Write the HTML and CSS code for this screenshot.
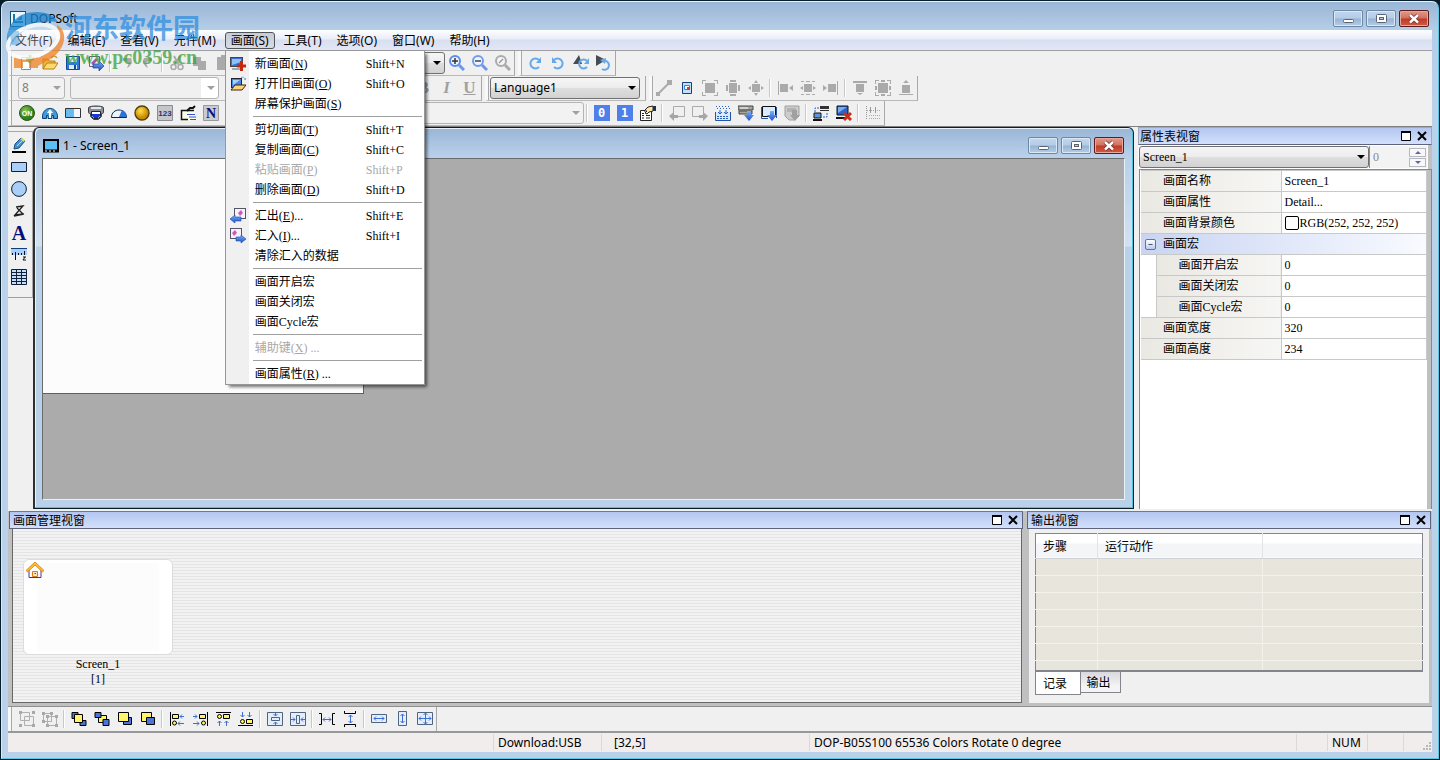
FILE: index.html
```html
<!DOCTYPE html>
<html lang="zh-CN">
<head>
<meta charset="utf-8">
<title>DOPSoft</title>
<link rel="stylesheet" href="styles.css">
</head>
<body>
<svg class="defs" aria-hidden="true">
  <defs>
    <linearGradient id="blue" x1="0" y1="0" x2="0" y2="1"><stop offset="0" stop-color="#7db0f5"/><stop offset="1" stop-color="#1c4fd0"/></linearGradient>
    <radialGradient id="gold" cx=".4" cy=".35"><stop offset="0" stop-color="#ffe04a"/><stop offset="1" stop-color="#c98a00"/></radialGradient>
    <radialGradient id="green" cx=".4" cy=".35"><stop offset="0" stop-color="#8fc850"/><stop offset="1" stop-color="#2f7d1e"/></radialGradient>
    <symbol id="min" viewBox="0 0 14 12"><rect x="2.500" y="6.500" width="10" height="3" rx="1" fill="#fff" stroke="#5b6472"/></symbol>
    <symbol id="max" viewBox="0 0 14 12"><rect x="2.500" y="1.500" width="10" height="8" rx="1" fill="#fff" stroke="#5b6472"/><rect x="5.500" y="4.500" width="4" height="2" fill="#b5cde6" stroke="#5b6472"/></symbol>
    <symbol id="close" viewBox="0 0 14 12"><path d="M3 2l8 7.500M11 2l-8 7.500" stroke="#6d3030" stroke-width="4"/><path d="M3 2l8 7.500M11 2l-8 7.500" stroke="#fff" stroke-width="2.400"/></symbol>
    <symbol id="dock" viewBox="0 0 12 12"><path d="M1.500 2v8.500h9V2z" fill="#fff" stroke="#000"/><path d="M1 2h10" stroke="#000" stroke-width="2"/></symbol>
    <symbol id="x" viewBox="0 0 12 12"><path d="M2 2l8 8M10 2l-8 8" stroke="#000" stroke-width="2"/></symbol>
  </defs>
</svg>

<div class="window">
  <header class="titlebar">
    <svg class="app-icon" viewBox="0 0 16 16"><rect x=".5" y=".5" width="15" height="15" fill="#eef6fc" stroke="#14506e"/><path d="M4 3v9M4 11h9" stroke="#1778a8" stroke-width="2"/><path d="M7 9l5-5v5z" fill="#2a8cc0"/></svg>
    <span class="title">DOPSoft</span>
    <div class="win-buttons">
      <button class="win-btn" aria-label="Minimize"><svg width="14" height="12"><use href="#min"/></svg></button>
      <button class="win-btn" aria-label="Maximize"><svg width="14" height="12"><use href="#max"/></svg></button>
      <button class="win-btn danger" aria-label="Close"><svg width="14" height="12"><use href="#close"/></svg></button>
    </div>
  </header>

  <div class="client">
    <nav class="menubar">
      <button class="menu-item">文件(F)</button>
      <button class="menu-item">编辑(E)</button>
      <button class="menu-item">查看(V)</button>
      <button class="menu-item">元件(M)</button>
      <div class="menu-wrap">
        <button class="menu-item open">画面(S)</button>
        <div class="dropdown">
          <button class="entry"><span class="gutter"><svg viewBox="0 0 16 16"><rect x=".5" y="1.500" width="12" height="9" fill="#3a6fd8" stroke="#444"/><path d="M2 3h9v3L2 9z" fill="#8fc0f8"/><path d="M2 12h9v2H2z" fill="#a8a8b0"/><path d="M11.500 5v10M7 10h9" stroke="#c5280c" stroke-width="3"/></svg></span><span class="label">新画面(<u>N</u>)</span><span class="key">Shift+N</span></button>
          <button class="entry"><span class="gutter"><svg viewBox="0 0 16 16"><rect x="1.500" y="2.500" width="10" height="9" fill="#4a86e4" stroke="#223"/><path d="M3 4h7L3 9z" fill="#a8d0fa"/><path d="M11 2c2-2 4 0 4 2l1-2" fill="none" stroke="#6aa0d8"/><path d="M1 14l4-5h11l-4 5z" fill="#ffd27a" stroke="#3a2a00"/></svg></span><span class="label">打开旧画面(<u>O</u>)</span><span class="key">Shift+O</span></button>
          <button class="entry"><span class="gutter"></span><span class="label">屏幕保护画面(<u>S</u>)</span></button>
          <hr>
          <button class="entry"><span class="gutter"></span><span class="label">剪切画面(<u>T</u>)</span><span class="key">Shift+T</span></button>
          <button class="entry"><span class="gutter"></span><span class="label">复制画面(<u>C</u>)</span><span class="key">Shift+C</span></button>
          <button class="entry" disabled><span class="gutter"></span><span class="label">粘贴画面(<u>P</u>)</span><span class="key">Shift+P</span></button>
          <button class="entry"><span class="gutter"></span><span class="label">删除画面(<u>D</u>)</span><span class="key">Shift+D</span></button>
          <hr>
          <button class="entry"><span class="gutter"><svg viewBox="0 0 16 16"><rect x="4.500" y=".5" width="11" height="10" fill="#f4f2fa" stroke="#556"/><path d="M8 5l3-3 2 3-3 3z" fill="#d258b8"/><path d="M0 11l5-4v2h6v4H5v2z" fill="url(#blue)" stroke="#1c4aa8" stroke-width=".6"/></svg></span><span class="label">汇出(<u>E</u>)...</span><span class="key">Shift+E</span></button>
          <button class="entry"><span class="gutter"><svg viewBox="0 0 16 16"><rect x=".5" y=".5" width="11" height="10" fill="#f4f2fa" stroke="#556"/><path d="M2 5l3-3 2 3-3 3z" fill="#d258b8"/><path d="M16 11l-5-4v2H6v4h5v2z" fill="url(#blue)" stroke="#1c4aa8" stroke-width=".6"/></svg></span><span class="label">汇入(<u>I</u>)...</span><span class="key">Shift+I</span></button>
          <button class="entry"><span class="gutter"></span><span class="label">清除汇入的数据</span></button>
          <hr>
          <button class="entry"><span class="gutter"></span><span class="label">画面开启宏</span></button>
          <button class="entry"><span class="gutter"></span><span class="label">画面关闭宏</span></button>
          <button class="entry"><span class="gutter"></span><span class="label">画面Cycle宏</span></button>
          <hr>
          <button class="entry" disabled><span class="gutter"></span><span class="label">辅助键(<u>X</u>) ...</span></button>
          <hr>
          <button class="entry"><span class="gutter"></span><span class="label">画面属性(<u>R</u>) ...</span></button>
        </div>
      </div>
      <button class="menu-item">工具(T)</button>
      <button class="menu-item">选项(O)</button>
      <button class="menu-item">窗口(W)</button>
      <button class="menu-item">帮助(H)</button>
    </nav>

    <div class="toolbars">
      <div class="tool-row">
        <div class="tool-group">
          <button class="tool" aria-label="New"><svg viewBox="0 0 16 16"><path d="M2.500 2.500h9v12h-9z" fill="#fff" stroke="#7b90b0"/><path d="M11 0v8M7 4h8" stroke="#4fb04a" stroke-width="3"/></svg></button>
          <button class="tool" aria-label="Open"><svg viewBox="0 0 16 16"><path d="M1 14V4h5l1 2h6v2" fill="#f0b840" stroke="#b98010"/><path d="M1 14l4-6h11l-4 6z" fill="#ffd970" stroke="#b98010"/><path d="M9 3c2-3 5-2 6 0" fill="none" stroke="#d89020" stroke-width="1.500"/></svg></button>
          <button class="tool" aria-label="Save"><svg viewBox="0 0 16 16"><path d="M1.500 1.500h13v13h-13z" fill="#2f7ad8" stroke="#164a98"/><path d="M4 2h8v5H4z" fill="#e8f2fc"/><path d="M4 10h8v4H4z" fill="#dceafa"/><path d="M9 10h2v4H9z" fill="#164a98"/></svg></button>
          <button class="tool" aria-label="Export"><svg viewBox="0 0 16 16"><path d="M1.500 1.500h10v10h-10z" fill="#f4f2fa" stroke="#667"/><path d="M3 8l5-5 2 2-5 5z" fill="#a058a8"/><path d="M16 11l-5-5v3H5v4h6v3z" fill="url(#blue)" stroke="#20408c" stroke-width=".7"/></svg></button>
          <span class="sep"></span>
          <button class="tool gray" aria-label="Undo"><svg viewBox="0 0 16 16"><path d="M6 3h8c2 4 0 8-4 10 2-4 2-6-1-7H6z"/></svg></button>
          <button class="tool gray" aria-label="Redo"><svg viewBox="0 0 16 16"><path d="M12 3H4c-2 4 0 8 4 10-2-4-2-6 1-7h3z"/></svg></button>
          <span class="sep"></span>
          <button class="tool gray" aria-label="Cut"><svg viewBox="0 0 16 16"><path d="M5 1l5 9M11 1L6 10" fill="none" stroke="#aaa" stroke-width="2"/><circle cx="4.500" cy="12" r="2.500" fill="none" stroke="#aaa" stroke-width="1.500"/><circle cx="11.500" cy="12" r="2.500" fill="none" stroke="#aaa" stroke-width="1.500"/></svg></button>
          <button class="tool gray" aria-label="Copy"><svg viewBox="0 0 16 16"><path d="M1 2h8v9H1zM6 6h8v9H6z"/></svg></button>
          <button class="tool gray" aria-label="Paste"><svg viewBox="0 0 16 16"><path d="M2 2h4V0h4v2h4v13H2z"/></svg></button>
          <label class="combo grow-1"><select aria-label="Zoom"><option></option></select></label>
          <button class="tool" aria-label="Zoom in"><svg viewBox="0 0 16 16"><circle cx="6" cy="6" r="5" fill="#eef4ff" stroke="#5b8def" stroke-width="2"/><path d="M10 10l5 5" stroke="#6f97e8" stroke-width="3"/><path d="M3 6h6M6 3v6" stroke="#333" stroke-width="1.500"/></svg></button>
          <button class="tool" aria-label="Zoom out"><svg viewBox="0 0 16 16"><circle cx="6" cy="6" r="5" fill="#eef4ff" stroke="#6f9cf0" stroke-width="2"/><path d="M10 10l5 5" stroke="#6f97e8" stroke-width="3"/><path d="M3 6h6" stroke="#444" stroke-width="1.500"/></svg></button>
          <button class="tool" aria-label="Zoom reset"><svg viewBox="0 0 16 16"><circle cx="6" cy="6" r="5" fill="#f4f4f4" stroke="#aaa" stroke-width="2"/><path d="M10 10l5 5" stroke="#aaa" stroke-width="3"/><path d="M4 8l4-4" stroke="#999" stroke-width="1.500"/></svg></button>
        </div>
        <div class="tool-group snug">
          <button class="tool" aria-label="Rotate right"><svg viewBox="0 0 16 16"><path d="M12 12a5 5 0 1 1 0-7" fill="none" stroke="#67a9e8" stroke-width="2"/><path d="M14 2v6H9z" fill="#67a9e8"/></svg></button>
          <button class="tool" aria-label="Rotate left"><svg viewBox="0 0 16 16"><path d="M4 12a5 5 0 1 0 0-7" fill="none" stroke="#67a9e8" stroke-width="2"/><path d="M2 2v6h5z" fill="#67a9e8"/></svg></button>
          <button class="tool" aria-label="Flip vertical"><svg viewBox="0 0 16 16"><path d="M0 9l6-9 3 9z" fill="#444c55"/><path d="M14 12a4.500 4.500 0 1 1 0-6" fill="none" stroke="#67a9e8" stroke-width="2"/><path d="M16 3v6h-5z" fill="#67a9e8"/></svg></button>
          <button class="tool" aria-label="Flip horizontal"><svg viewBox="0 0 16 16"><path d="M0 0l10 5-10 6z" fill="#444c55"/><path d="M6 14a4.500 4.500 0 1 0 1-8" fill="none" stroke="#67a9e8" stroke-width="2"/><path d="M4 5l6-2-1 6z" fill="#67a9e8"/></svg></button>
        </div>
      </div>

      <div class="tool-row">
        <div class="tool-group">
          <label class="combo off w-size"><select disabled aria-label="Font size"><option>8</option></select></label>
          <label class="combo off blank w-font"><select disabled aria-label="Font"><option></option></select></label>
          <label class="combo off grow-2"><select disabled aria-label="Text color"><option></option></select></label>
          <button class="tool letter" aria-label="Bold"><b>B</b></button>
          <button class="tool letter" aria-label="Italic"><i>I</i></button>
          <button class="tool letter" aria-label="Underline"><u>U</u></button>
        </div>
        <div class="tool-group snug">
          <label class="combo w-lang"><select aria-label="Language"><option>Language1</option></select></label>
        </div>
        <div class="tool-group tight">
          <button class="tool gray" aria-label="Line"><svg viewBox="0 0 16 16"><path d="M2 14L13 3" stroke="#aaa" stroke-width="2"/><path d="M0 12h4v4H0zM11 0h5v5h-5z"/></svg></button>
          <button class="tool" aria-label="Fit"><svg viewBox="0 0 16 16"><path d="M3.500 2.500h9v11h-9z" fill="#bfe2fb" stroke="#1b3f78"/><path d="M5.500 5.500h5v4h-5z" fill="#fff" stroke="#2b8be0"/><path d="M8 7h3v3H8z" fill="#d83a2a"/></svg></button>
          <button class="tool gray" aria-label="Same width"><svg viewBox="0 0 16 16"><path d="M3 3h10v10H3zM0 0h4v1H1v3H0zM12 0h4v4h-1V1h-3zM0 12h1v3h3v1H0zM15 12h1v4h-4v-1h3z"/></svg></button>
          <button class="tool gray" aria-label="Same height"><svg viewBox="0 0 16 16"><path d="M4 3h8v10H4zM5 0h6v2H5zM5 14h6v2H5zM1 5h2v6H1zM13 5h2v6h-2z"/></svg></button>
          <button class="tool gray" aria-label="Same size"><svg viewBox="0 0 16 16"><path d="M4 4h8v8H4zM8 0l2 3H6zM8 16l2-3H6zM0 8l3-2v4zM16 8l-3-2v4z"/></svg></button>
          <span class="sep"></span>
          <button class="tool gray" aria-label="Align left"><svg viewBox="0 0 16 16"><path d="M1 1h1v14H1zM3 4h8v8H3zM12 8l4-3v6z"/></svg></button>
          <button class="tool gray" aria-label="Align center"><svg viewBox="0 0 16 16"><path d="M4 4h8v8H4zM1 1h3v1H1zM12 1h3v1h-3zM1 14h3v1H1zM12 14h3v1h-3zM6 1h4v1H6zM6 14h4v1H6zM0 8l3-2v4zM16 8l-3-2v4z"/></svg></button>
          <button class="tool gray" aria-label="Align right"><svg viewBox="0 0 16 16"><path d="M14 1h1v14h-1zM5 4h8v8H5zM4 8L0 5v6z"/></svg></button>
          <span class="sep"></span>
          <button class="tool gray" aria-label="Align top"><svg viewBox="0 0 16 16"><path d="M1 1h14v2H1zM4 4h8v8H4zM8 15l3-2H5z"/></svg></button>
          <button class="tool gray" aria-label="Align middle"><svg viewBox="0 0 16 16"><path d="M3 3h10v10H3zM0 0h4v1H1v3H0zM12 0h4v4h-1V1h-3zM0 12h1v3h3v1H0zM15 12h1v4h-4v-1h3zM6 0h4v2H6zM6 14h4v2H6zM0 6h2v4H0zM14 6h2v4h-2z"/></svg></button>
          <button class="tool gray" aria-label="Align bottom"><svg viewBox="0 0 16 16"><path d="M1 14h14v1H1zM4 5h8v8H4zM8 0l3 3H5z"/></svg></button>
        </div>
      </div>

      <div class="tool-row">
        <div class="tool-group">
          <button class="tool" aria-label="Button"><svg viewBox="0 0 16 16"><circle cx="8" cy="8" r="7.500" fill="url(#green)" stroke="#245b18"/><text x="8" y="11" class="icon-on">ON</text></svg></button>
          <button class="tool" aria-label="Meter"><svg viewBox="0 0 16 16"><path d="M.5 13.500v-3C2 1 14 1 15.500 10.500v3h-4v-3H10v3H6v-3H4.500v3z" fill="#3f9be0" stroke="#0c3f70"/><path d="M8 4l3 4H9v5H7V8H5z" fill="#fff"/></svg></button>
          <button class="tool" aria-label="Bar"><svg viewBox="0 0 16 16"><path d="M.5 3.500h15v9H.5z" fill="#f4f8fc" stroke="#333"/><path d="M1 4h8v8H1z" fill="#6abcf0"/></svg></button>
          <button class="tool" aria-label="Tank"><svg viewBox="0 0 16 16"><path d="M.5 2.500c1-2 14-2 15 0v5c0 1-1 1-2 1v3l-3 3h-5l-3-3v-3c-1 0-2 0-2-1z" fill="#8a8f98" stroke="#444"/><path d="M3 2h10v2H3z" fill="#e4e6ee"/><path d="M3.500 6.500h9v5l-2 2h-5l-2-2z" fill="#fff" stroke="#223"/><path d="M4 9h8v2l-2 2H6l-2-2z" fill="#1738d8"/></svg></button>
          <button class="tool" aria-label="Gauge"><svg viewBox="0 0 16 16"><path d="M.5 12.500c0-10 15-10 15 0z" fill="#eaf5fd" stroke="#124"/><path d="M8 12l3-7c3 1 4.500 4 4.500 7z" fill="#2a74d8"/></svg></button>
          <button class="tool" aria-label="Lamp"><svg viewBox="0 0 16 16"><circle cx="8" cy="8" r="7" fill="url(#gold)" stroke="#50400a" stroke-width="1.400"/></svg></button>
          <button class="tool" aria-label="Numeric"><svg viewBox="0 0 16 16"><path d="M.5 .5h15v15H.5z" fill="#c4c6cc" stroke="#8a8c92"/><text x="8" y="11" class="icon-num">123</text></svg></button>
          <button class="tool" aria-label="Alarm"><svg viewBox="0 0 16 16"><path d="M1.500 5.500h13v10h-13z" fill="#fbfbe8"/><path d="M14 5.500H1.500v9H8" fill="none" stroke="#111" stroke-width="1.500"/><path d="M7 6l3-3h3l2-2" fill="none" stroke="#111" stroke-width="2"/><path d="M7 9.500h8M9 12h7M10 14.500h6" stroke="#2a54d0"/></svg></button>
          <button class="tool" aria-label="Text"><svg viewBox="0 0 16 16"><path d="M.5 .5h15v15H.5z" fill="#c9cbd3" stroke="#999"/><text x="8" y="13" class="icon-n">N</text></svg></button>
          <label class="combo off w-element"><select disabled aria-label="Element"><option></option></select></label>
          <span class="sep"></span>
          <button class="tool" aria-label="State 0"><span class="bit">0</span></button>
          <button class="tool" aria-label="State 1"><span class="bit">1</span></button>
          <button class="tool" aria-label="Properties"><svg viewBox="0 0 16 16"><path d="M.5 5.500h11v10H.5z" fill="#fff" stroke="#222"/><path d="M2 8.500h2M2 10.500h2M2 13h2M6 10.500h4M6 13h4" stroke="#222"/><path d="M4 6l4-4 5-1v5L9 7l-2 2-2-1 2-2z" fill="#ffe7a8" stroke="#222"/><path d="M13 1h3v5h-3z" fill="#22304c"/></svg></button>
          <span class="sep"></span>
          <button class="tool" aria-label="Previous"><svg viewBox="0 0 16 16"><path d="M4.500 8V1.500h11v10H9" fill="none" stroke="#aaa"/><path d="M0 11l5-4v3h4v3H5v3z" fill="#a6a6a6"/></svg></button>
          <button class="tool" aria-label="Next"><svg viewBox="0 0 16 16"><path d="M11.500 8V1.500H.5v10H7" fill="none" stroke="#aaa"/><path d="M16 11l-5-4v3H7v3h4v3z" fill="#a6a6a6"/></svg></button>
          <button class="tool" aria-label="Compile"><svg viewBox="0 0 16 16"><path d="M1 1.500h14M2 3.500h14" stroke="#2a62c0" stroke-dasharray="1 2"/><path d="M.5 7v8.500h15V7" fill="#d9e9fb" stroke="#2456a8"/><path d="M5 5v4M11 5v4M3 7l2 2 2-2M9 7l2 2 2-2" fill="none" stroke="#2a62c0"/><path d="M2 11.500h12M2 13.500h12" stroke="#2a62c0" stroke-dasharray="2 1"/></svg></button>
          <button class="tool" aria-label="Download"><svg viewBox="0 0 16 16"><path d="M0 1h15v4H0zM1 6h13v3H1z" fill="#a9a49a" stroke="#444"/><path d="M2 3h8" stroke="#fff"/><path d="M9 6h4v4h3l-5 6-5-6h3z" fill="url(#blue)"/></svg></button>
          <button class="tool" aria-label="Download screen"><svg viewBox="0 0 16 16"><path d="M1.500 1.500h13v10h-13z" fill="#d8ebff" stroke="#111"/><path d="M.5 2v11.500H7M15.500 2v11" stroke="#2456a8" fill="none"/><path d="M9 6h4v4h3l-5 6-5-6h3z" fill="url(#blue)"/></svg></button>
          <button class="tool" aria-label="Download recipe"><svg viewBox="0 0 16 16"><path d="M1 1h14v10l-4 4H5l-4-4z" fill="#ccc" stroke="#a0a0a0"/><path d="M3 4h9M3 6h9" stroke="#999"/><path d="M8 5h5v5h3l-5 6-5-6h2z" fill="#a0a0a0"/></svg></button>
          <span class="sep"></span>
          <button class="tool" aria-label="Simulate online"><svg viewBox="0 0 16 16"><path d="M7 1h9v3H7zM7 5h9v1H7z" fill="#333"/><path d="M2 7V3h4M14 8v4h-4" fill="none" stroke="#2a62c0" stroke-dasharray="2 1"/><path d="M1 8h7v5H1z" fill="#5a94e0" stroke="#111"/><path d="M0 15h9" stroke="#111" stroke-width="2"/></svg></button>
          <button class="tool" aria-label="Simulate offline"><svg viewBox="0 0 16 16"><path d="M1 1h11v9H1z" fill="#2d62c8" stroke="#111"/><path d="M2 2h9l-9 6z" fill="#76aef0"/><path d="M0 13h9" stroke="#111" stroke-width="2"/><path d="M8 8l7 7M15 8l-7 7" stroke="#c8301a" stroke-width="3"/></svg></button>
          <span class="sep"></span>
          <button class="tool" aria-label="Grid"><svg viewBox="0 0 16 16"><path d="M1.500 1v14" stroke="#999" stroke-dasharray="1 1"/><path d="M2 5.500h14M4 10.500h12M4 13.500h12" stroke="#aaa" stroke-dasharray="1 1"/><path d="M5.500 2v6M10.500 2v6" stroke="#999"/></svg></button>
        </div>
      </div>
    </div>

    <div class="workspace">
      <aside class="draw-tools">
        <button class="draw" aria-label="Pen"><svg viewBox="0 0 16 16"><path d="M1 15h14" stroke="#000" stroke-width="2"/><path d="M3 12l1-5 6-6 4 3-6 7z" fill="#3f93d8" stroke="#1d4c80"/><path d="M9 2l4 3 1-2-3-2z" fill="#d8e070"/><path d="M6 9l5-5" stroke="#b9dcf6"/></svg></button>
        <button class="draw" aria-label="Rectangle"><svg viewBox="0 0 16 16"><path d="M.5 3.500h15v9H.5z" fill="#a9cff8" stroke="#111f38"/></svg></button>
        <button class="draw" aria-label="Ellipse"><svg viewBox="0 0 16 16"><circle cx="8" cy="8" r="7.400" fill="#a9cff8" stroke="#111f38"/></svg></button>
        <button class="draw" aria-label="Polygon"><svg viewBox="0 0 16 16"><path d="M5 4l7-1-8 9 8-1-6-6M3 13l10-2" fill="none" stroke="#222" stroke-width="1.300"/></svg></button>
        <button class="draw glyph" aria-label="Text"><b>A</b></button>
        <button class="draw" aria-label="Scale"><svg viewBox="0 0 16 16"><path d="M0 1h16v7H0z" fill="#a9cff8"/><path d="M0 1.500h16" stroke="#123a80"/><path d="M1.500 6v2M4.500 5v8M7.500 6v2M10.500 6v2M13.500 4v4M12 10h3M12 13h3M14 10l-2 3" stroke="#111" fill="none"/></svg></button>
        <button class="draw" aria-label="Table"><svg viewBox="0 0 16 16"><path d="M.5 .5h15v15H.5z" fill="#c4defa" stroke="#111f38"/><path d="M5.500 0v16M10.500 0v16M0 3.500h16M0 6.500h16M0 9.500h16M0 12.500h16" stroke="#111f38"/></svg></button>
      </aside>

      <section class="mdi">
        <header class="mdi-title">
          <svg class="mdi-icon" viewBox="0 0 16 14"><path d="M1 1h14v11H1z" fill="#5cc0f6" stroke="#000" stroke-width="2"/><path d="M0 12h16" stroke="#000" stroke-width="3"/><path d="M2 12h2M6 12h2M10 12h2" stroke="#fff"/></svg>
          <span class="title">1 - Screen_1</span>
          <div class="win-buttons">
            <button class="win-btn" aria-label="Minimize"><svg width="14" height="12"><use href="#min"/></svg></button>
            <button class="win-btn" aria-label="Maximize"><svg width="14" height="12"><use href="#max"/></svg></button>
            <button class="win-btn danger" aria-label="Close"><svg width="14" height="12"><use href="#close"/></svg></button>
          </div>
        </header>
        <div class="mdi-body"><div class="canvas"></div></div>
      </section>

      <section class="panel props">
        <header class="panel-head"><h2>属性表视窗</h2><button aria-label="Dock"><svg><use href="#dock"/></svg></button><button aria-label="Close"><svg><use href="#x"/></svg></button></header>
        <div class="props-pick">
          <label class="combo serif grow"><select aria-label="Object"><option>Screen_1</option></select></label>
          <div class="spinner"><input type="text" value="0" disabled aria-label="State"><div class="spin"><button aria-label="Up"><i class="up"></i></button><button aria-label="Down"><i class="down"></i></button></div></div>
        </div>
        <div class="props-scroll">
          <table class="prop-table">
            <colgroup><col class="c-tree"><col class="c-name"><col></colgroup>
            <tr><th colspan="2">画面名称</th><td>Screen_1</td></tr>
            <tr><th colspan="2">画面属性</th><td>Detail...</td></tr>
            <tr><th colspan="2">画面背景颜色</th><td><span class="swatch-row"><span class="swatch"></span>RGB(252, 252, 252)</span></td></tr>
            <tr class="section"><th colspan="3"><span class="section-row"><button class="fold" aria-label="Collapse"><svg viewBox="0 0 11 11"><path d="M3 5.500h5" stroke="#223a70"/></svg></button>画面宏</span></th></tr>
            <tr class="child"><td class="tree"></td><th>画面开启宏</th><td>0</td></tr>
            <tr class="child"><td class="tree"></td><th>画面关闭宏</th><td>0</td></tr>
            <tr class="child"><td class="tree"></td><th>画面Cycle宏</th><td>0</td></tr>
            <tr><th colspan="2">画面宽度</th><td>320</td></tr>
            <tr><th colspan="2">画面高度</th><td>234</td></tr>
          </table>
        </div>
      </section>
    </div>

    <div class="docks">
      <section class="panel manager">
        <header class="panel-head"><h2>画面管理视窗</h2><button aria-label="Dock"><svg><use href="#dock"/></svg></button><button aria-label="Close"><svg><use href="#x"/></svg></button></header>
        <div class="manager-body">
          <figure class="thumb">
            <div class="thumb-card">
              <svg viewBox="0 0 18 18"><path d="M3 8v8.500h12V8L9 3z" fill="#fff" stroke="#5a2a9a"/><path d="M6.500 15.500V10.500h5v5z" fill="#ffe8b8" stroke="#d87a20"/><path d="M8.500 12.500h1.500" stroke="#d02020"/><path d="M0 9.500L9 1l9 8.500-1.500 1.500L9 4l-7.500 7z" fill="#ffc02e" stroke="#d8740c" stroke-width=".8"/></svg>
              <div class="thumb-view"></div>
            </div>
            <figcaption>Screen_1<br>[1]</figcaption>
          </figure>
        </div>
      </section>
      <section class="panel output">
        <header class="panel-head"><h2>输出视窗</h2><button aria-label="Dock"><svg><use href="#dock"/></svg></button><button aria-label="Close"><svg><use href="#x"/></svg></button></header>
        <div class="output-body">
          <table class="log">
            <colgroup><col class="c-step"><col class="c-action"><col></colgroup>
            <thead><tr><th>步骤</th><th>运行动作</th><th></th></tr></thead>
            <tbody>
              <tr><td></td><td></td><td></td></tr><tr><td></td><td></td><td></td></tr><tr><td></td><td></td><td></td></tr><tr><td></td><td></td><td></td></tr><tr><td></td><td></td><td></td></tr><tr><td></td><td></td><td></td></tr><tr class="part"><td></td><td></td><td></td></tr>
            </tbody>
          </table>
          <div class="tabs"><button class="tab active">记录</button><button class="tab">输出</button></div>
        </div>
      </section>
    </div>

    <div class="tool-row align-row">
      <div class="tool-group">
        <button class="tool" aria-label="Group"><svg viewBox="0 0 16 16"><path d="M1.500 1.500h9v8h-9zM5.500 5.500h9v9h-9z" fill="none" stroke="#b0b0b0"/><path d="M0 0h3v3H0zM13 0h3v3h-3zM0 13h3v3H0zM13 13h3v3h-3z" fill="#a8a8a8"/></svg></button>
        <button class="tool" aria-label="Ungroup"><svg viewBox="0 0 16 16"><path d="M1.500 2.500h8v8h-8zM5.500 5.500h9v9h-9z" fill="none" stroke="#b0b0b0"/><path d="M0 1h3v3H0zM8 1h3v3H8zM0 9h3v3H0zM4 4h3v3H4zM13 4h3v3h-3zM4 13h3v3H4zM13 13h3v3h-3z" fill="#a8a8a8"/></svg></button>
        <span class="sep"></span>
        <button class="tool" aria-label="Bring forward"><svg viewBox="0 0 16 16"><path d="M1 1.500h6v6H1zM9 9.500h6v5H9z" fill="#4a74d8" stroke="#000"/><path d="M3.500 3.500h8v8h-8z" fill="#fff46a" stroke="#000"/></svg></button>
        <button class="tool" aria-label="Send backward"><svg viewBox="0 0 16 16"><path d="M4.500 4.500h8v7h-8z" fill="#fff46a" stroke="#000"/><path d="M1 1.500h6v5H1zM9 8.500h6v6H9z" fill="#4a74d8" stroke="#000"/></svg></button>
        <button class="tool" aria-label="To front"><svg viewBox="0 0 16 16"><path d="M6.500 6.500h8v7h-8z" fill="#4a74d8" stroke="#000"/><path d="M1.500 1.500h10v9h-10z" fill="#fff46a" stroke="#000"/></svg></button>
        <button class="tool" aria-label="To back"><svg viewBox="0 0 16 16"><path d="M1.500 1.500h10v9h-10z" fill="#fff46a" stroke="#000"/><path d="M6.500 6.500h8v7h-8z" fill="#4a74d8" stroke="#000"/></svg></button>
        <span class="sep"></span>
        <button class="tool line" aria-label="Align left"><svg viewBox="0 0 16 16"><path class="k" d="M1.500 1v14"/><path class="y" d="M3.500 3.500h6v4h-6z"/><circle class="y" cx="5.500" cy="12" r="2"/><path class="b" d="M15 5.500h-4M13 3.500l-2 2 2 2M15 12.500H9M11 10.500l-2 2 2 2"/></svg></button>
        <button class="tool line" aria-label="Align right"><svg viewBox="0 0 16 16"><path class="k" d="M15.500 1v14"/><path class="y" d="M7.500 3.500h6v4h-6z"/><circle class="y" cx="11.500" cy="12" r="2"/><path class="b" d="M1 5.500h4M3 3.500l2 2-2 2M1 12.500h6M5 10.500l2 2-2 2"/></svg></button>
        <button class="tool line" aria-label="Align top"><svg viewBox="0 0 16 16"><path class="k" d="M1 1.500h15"/><circle class="y" cx="4.500" cy="5.500" r="2"/><path class="y" d="M8.500 3.500h6v4h-6z"/><path class="b" d="M4.500 15v-5M2.500 12l2-2 2 2M11.500 15v-5M9.500 12l2-2 2 2"/></svg></button>
        <button class="tool line" aria-label="Align bottom"><svg viewBox="0 0 16 16"><path class="k" d="M0 14.500h15"/><circle class="y" cx="4.500" cy="10.500" r="2"/><path class="y" d="M8.500 8.500h6v4h-6z"/><path class="b" d="M4.500 1v5M2.500 4l2 2 2-2M11.500 1v5M9.500 4l2 2 2-2"/></svg></button>
        <span class="sep"></span>
        <button class="tool line" aria-label="Center vertical"><svg viewBox="0 0 16 16"><path class="f" d="M.5 1.500h15v13H.5z"/><path class="f" d="M4.500 6.500h8v3h-8z"/><path class="b" d="M8.500 2v3M6.500 3l2 2 2-2M8.500 14v-3M6.500 13l2-2 2 2"/></svg></button>
        <button class="tool line" aria-label="Center horizontal"><svg viewBox="0 0 16 16"><path class="f" d="M.5 1.500h15v13H.5z"/><path class="f" d="M6.500 4.500h3v8h-3z"/><path class="b" d="M1 8.500h4M3 6.500l2 2-2 2M15 8.500h-4M13 6.500l-2 2 2 2"/></svg></button>
        <span class="sep"></span>
        <button class="tool line" aria-label="Space across"><svg viewBox="0 0 16 16"><path class="k" d="M0 2.500h2.500v11H0M16 2.500h-2.500v11H16"/><path class="b" d="M4 8.500h8M6 6.500l-2 2 2 2M10 6.500l2 2-2 2"/></svg></button>
        <button class="tool line" aria-label="Space down"><svg viewBox="0 0 16 16"><path class="k" d="M2.500 0v2.500h11V0M2.500 16v-2.500h11V16"/><path class="b" d="M8.500 4v8M6.500 6l2-2 2 2M6.500 10l2 2 2-2"/></svg></button>
        <span class="sep"></span>
        <button class="tool line" aria-label="Match width"><svg viewBox="0 0 16 16"><path class="f" d="M.5 3.500h15v8H.5z"/><path class="b" d="M3 7.500h10M5 5.500l-2 2 2 2M11 5.500l2 2-2 2"/></svg></button>
        <button class="tool line" aria-label="Match height"><svg viewBox="0 0 16 16"><path class="f" d="M4.500 .5h8v14h-8z"/><path class="b" d="M8.500 3v9M6.500 5l2-2 2 2M6.500 10l2 2 2-2"/></svg></button>
        <button class="tool line" aria-label="Match size"><svg viewBox="0 0 16 16"><path class="f" d="M.5 1.500h15v12H.5z"/><path class="b" d="M2 7.500h12M8.500 2v11M4 5.500l-2 2 2 2M12 5.500l2 2-2 2M6.500 4l2-2 2 2M6.500 11l2 2 2-2"/></svg></button>
      </div>
    </div>

    <footer class="status">
      <span class="cell s-main"></span>
      <span class="cell s-link">Download:USB</span>
      <span class="cell s-pos">[32,5]</span>
      <span class="cell s-model">DOP-B05S100 65536 Colors Rotate 0 degree</span>
      <span class="cell s-gap"></span>
      <span class="cell s-num">NUM</span>
      <span class="cell s-scroll"></span>
      <span class="cell s-grip"><svg viewBox="0 0 10 10"><path d="M7 1h2v2H7zM4 4h2v2H4zM7 4h2v2H7zM1 7h2v2H1zM4 7h2v2H4zM7 7h2v2H7z" fill="#bdb8b8"/></svg></span>
    </footer>
  </div>

  <div class="watermark">
    <svg class="mark" viewBox="0 0 60 58"><path d="M3 40C-2 16 10 1 32 1c10 0 18 4 21 10C36 8 14 16 3 40z" fill="#1c86d0"/><path d="M52 14c12 6 10 28-14 38l-8 5-2-8c14-4 26-16 24-35z" fill="#ef8022"/><path d="M9 46h24v11h-9v-6h-6v6H9z" fill="#ef8022"/><ellipse cx="28" cy="30" rx="26" ry="15" fill="#fff" fill-opacity=".35" stroke="#fff" stroke-width="4" transform="rotate(-18 28 30)"/><path d="M4 20h10v14H7z" fill="#1c86d0" fill-opacity=".5"/></svg>
    <div class="mark-text"><span class="mark-name">河东软件园</span><span class="mark-url">www.pc0359.cn</span></div>
  </div>
</div>
</body>
</html>
```
FILE: styles.css
```css
* { box-sizing: border-box; }
body {
  margin: 0;
  min-height: 100vh;
  display: flex;
  background: #061d2c;
  color: #000;
  font: 12px/16px "Noto Sans", "Noto Sans CJK SC", sans-serif;
}
button, input, select { font: inherit; color: inherit; }
button { margin: 0; padding: 0; border: 0; background: none; }
h2, figure { margin: 0; }
table { border-collapse: collapse; border-spacing: 0; }
.defs { position: absolute; width: 0; height: 0; }

.window {
  position: relative;
  flex: 1;
  min-width: 0;
  display: flex;
  flex-direction: column;
  margin: 1px;
  border: 1px solid #5cc8e4;
  border-top-color: #e8f2fa;
  border-left-color: #d8e8f6;
  border-radius: 7px 7px 0 0;
  padding: 0 6px 6px;
  background: linear-gradient(#9ab6d6 0, #b5cee8 28px, #bad2ea 120px, #b9d2ea);
}
.titlebar { display: flex; align-items: center; height: 28px; padding: 0 3px 0 2px; }
.app-icon { width: 16px; height: 16px; margin: 6px 4px 0 0; }
.titlebar .title { margin-top: 6px; }
.title { flex: 1; }
.win-buttons { display: flex; gap: 3px; }
.titlebar .win-buttons { margin-top: 5px; }
.win-btn {
  display: flex; align-items: center; justify-content: center;
  width: 30px; height: 17px;
  border: 1px solid #6d87a6;
  border-radius: 2px;
  box-shadow: inset 0 0 0 1px #dbe8f6;
  background: linear-gradient(#c3d7ed 0, #b4cce6 48%, #97b3d2 52%, #b4cee8);
}
.win-btn.danger {
  border-color: #5c1c1c;
  box-shadow: inset 0 0 0 1px #e8a79c;
  background: linear-gradient(#e0998c 0, #d3705f 48%, #bf3a26 52%, #cf5b44);
}
.client { flex: 1; display: flex; flex-direction: column; min-height: 0; background: #f0f0f0; }

.menubar {
  display: flex;
  gap: 1px;
  height: 21px;
  padding-top: 2px;
  border-bottom: 1px solid #a0a0a4;
  background: linear-gradient(#fefefe 0, #e9edf8 9px, #d8dff0 10px, #e2e6f6 19px);
}
.menu-item { height: 17px; padding: 0 7px; line-height: 16px; white-space: nowrap; }
.menu-item.open {
  padding: 0 5px;
  margin: 0 1px;
  border: 1px solid #50555c;
  border-radius: 3px;
  line-height: 14px;
  background: linear-gradient(#c9ccd4, #d8dbe4);
}
.menu-wrap { position: relative; }
.dropdown {
  position: absolute; z-index: 5; top: 18px; left: 1px;
  width: 200px;
  padding: 3px 0 0;
  border: 1px solid #979797;
  background: linear-gradient(90deg, #f0f0f0 23px, #fff 23px);
  box-shadow: 3px 3px 3px -1px rgba(0, 0, 0, .55);
  font-family: "Liberation Serif", "Noto Sans CJK SC", serif;
}
.entry { display: grid; grid-template-columns: 29px 111px 1fr; align-items: center; width: 100%; height: 20px; text-align: left; white-space: nowrap; }
.entry:disabled { color: #a8a8a8; }
.gutter { display: flex; padding-left: 4px; }
.gutter svg { width: 16px; height: 16px; }
.dropdown hr { height: 1px; margin: 2px 2px 3px 27px; border: 0; background: #a0a0a0; }

.tool-row { display: flex; height: 25px; }
.tool-group {
  display: flex; align-items: center;
  padding-left: 4px;
  border-right: 1px solid #a8a8a8;
  border-bottom: 1px solid #b8b8b8;
  border-left: 3px solid #f8f8f8;
  box-shadow: inset 1px 0 #a8a8a8;
}
.tool-group + .tool-group { margin-left: 3px; }
.tool-group.snug { padding-left: 2px; }
.tool-group.tight { padding-left: 0; }
.tool { flex: none; display: flex; align-items: center; justify-content: center; width: 23px; height: 22px; }
.tool svg { width: 16px; height: 16px; }
.gray svg { fill: #aaa; }
.sep { flex: none; width: 2px; height: 18px; margin: 0 2px; border-left: 1px solid #c8c8c8; border-right: 1px solid #fff; }
.letter { font: 17px/20px "Liberation Serif", serif; color: #a0a0a0; font-weight: bold; }
.bit { width: 16px; height: 16px; background: #4f7fe8; color: #fff; font: bold 12px/16px "DejaVu Sans Mono", monospace; text-align: center; }
.icon-on { font: bold 7px "Liberation Sans", sans-serif; fill: #fff; text-anchor: middle; }
.icon-num { font: bold 8px "Liberation Sans", sans-serif; fill: #28346e; text-anchor: middle; }
.icon-n { font: bold 14px "Liberation Serif", serif; fill: #0a0a7a; text-anchor: middle; }

.combo { position: relative; display: block; height: 22px; }
.combo select {
  appearance: none;
  display: block; width: 100%; height: 100%;
  padding: 0 20px 0 3px;
  border: 1px solid #707070;
  border-radius: 3px;
  background: linear-gradient(#f6f6f6, #ececec 48%, #dedede 52%, #d2d2d2);
  outline: 0;
}
.combo::after {
  content: ""; position: absolute; right: 4px; top: 9px;
  border: 4px solid transparent; border-top-color: #000; border-bottom: 0;
  pointer-events: none;
}
.combo.off select { color: #808080; opacity: 1; border-color: #b4b4b4; background: #f2f2f2; }
.combo.blank select { background: linear-gradient(90deg, #f0f0f0 130px, #fff 130px); }
.combo.off::after { border-top-color: #a0a0a0; }
.combo.serif select { font-family: "Liberation Serif", serif; }
.grow-1 { width: 211px; }
.grow-2 { width: 187px; margin-left: 6px; }
.w-size { width: 47px; margin-left: 3px; }
.w-font { width: 149px; margin-left: 5px; }
.w-lang { width: 150px; margin-right: 5px; }
.w-element { width: 359px; margin-left: 3px; }
.grow { flex: 1; min-width: 0; }

.workspace { flex: 1; display: flex; min-height: 0; border-top: 1px solid #808080; }
.draw-tools {
  align-self: flex-start;
  width: 25px;
  padding: 5px 0 6px 3px;
  margin-top: 4px;
  border-top: 1px solid #a8a8a8;
  border-bottom: 1px solid #a0a0a0;
  border-right: 1px solid #a8a8a8;
}
.draw { display: flex; align-items: center; width: 16px; height: 16px; margin-bottom: 6px; }
.draw svg { width: 16px; height: 16px; }
.glyph { justify-content: center; color: #0a0a78; font: 20px/16px "Liberation Serif", serif; }

.mdi {
  flex: 1; min-width: 0;
  display: flex; flex-direction: column;
  padding: 3px 8px 8px 7px;
  border: 1px solid #04202c;
  border-left: 2px solid #303030;
  border-radius: 6px 6px 0 0;
  box-shadow: inset -1px -1px #4cc4e0, inset 1px 1px #e8f2fa;
  background: linear-gradient(#9ab6d6 0, #b8d0ea 28px, #d2e2f2 118px, #b9d2ea 119px);
}
.mdi-title { display: flex; align-items: center; height: 27px; padding: 2px 1px 0 1px; }
.mdi-icon { width: 16px; height: 14px; margin-right: 4px; }
.mdi-body { flex: 1; border: 1px solid #6c6c6c; border-right-color: #e8f0f8; border-bottom-color: #e8f0f8; background: #ababab; }
.canvas { width: 321px; height: 235px; background: #fcfcfc; border-right: 1px solid #606060; border-bottom: 1px solid #606060; }

.panel { display: flex; flex-direction: column; }
.panel-head {
  display: flex; align-items: center;
  height: 18px;
  padding: 0 1px 0 3px;
  border: 1px solid #5c6480;
  border-top-color: #70788c;
  background: linear-gradient(#b4c6f0, #d2e0fc);
}
.panel-head h2 { flex: 1; font: 12px/16px "Noto Sans CJK SC", sans-serif; }
.panel-head button { width: 16px; height: 14px; }
.panel-head svg { display: block; width: 12px; height: 12px; margin: 0 auto; }

.props { width: 294px; margin-left: 4px; }
.props .panel-head { padding-left: 1px; border-color: #a0a8c0; border-bottom-color: #5c6480; }
.props-pick { display: flex; height: 24px; padding: 1px 1px 1px 1px; border-right: 4px solid #c0c0c0; background: #fff; }
.spinner { display: flex; align-items: center; width: 58px; background: #f3f3f3; border-left: 1px solid #888; }
.spinner input { width: 39px; padding: 0 0 0 3px; border: 0; background: none; color: #888; font-family: "Liberation Serif", serif; }
.spin { display: grid; gap: 1px; }
.spin button { display: flex; align-items: center; justify-content: center; width: 17px; height: 9px; border: 1px solid #b8b8c0; background: #f8f8fa; }
.spin i { border: 3px solid transparent; }
.spin .up { border-top: 0; border-bottom-color: #5a6aa0; }
.spin .down { border-bottom: 0; border-top-color: #5a6aa0; }
.props-scroll { flex: 1; border: solid #888; border-width: 1px 1px 0 1px; margin-left: 1px; padding: 0 4px 0 1px; box-shadow: inset -4px 0 #c0c0c0; background: #fff; }
.prop-table { width: 100%; table-layout: fixed; font: 12px/16px "Liberation Serif", "Noto Sans CJK SC", serif; }
.c-tree { width: 15px; }
.c-name { width: 125px; }
.prop-table th, .prop-table td { height: 21px; padding: 0 3px; border: 1px solid #c8c8c8; border-left: 0; text-align: left; font-weight: normal; background: #fff; white-space: nowrap; }
.prop-table th { padding-left: 22px; background: linear-gradient(90deg, #eae8e2, #f6f6f4); }
.prop-table .section th { padding-left: 4px; background: linear-gradient(90deg, #c8d4f2, #f8faff); }
.section-row { display: flex; align-items: center; gap: 7px; }
.fold { width: 11px; height: 11px; border: 1px solid #5c74a8; border-radius: 2px; background: linear-gradient(#fff, #bccbe8); }
.fold svg { display: block; width: 9px; height: 9px; }
.prop-table .tree { padding: 0; border-top: 0; border-bottom: 0; }
.swatch-row { display: flex; align-items: center; }
.swatch { width: 14px; height: 14px; margin-right: 1px; border: 1px solid #000; border-radius: 2px; background: #fcfcfc; }

.docks { display: flex; gap: 4px; padding: 2px 1px 0; border-bottom: 1px solid #909090; background: linear-gradient(#f0f0f0 2px, #c0c0c0 2px); }
.manager { flex: 1; min-width: 0; }
.manager-body {
  flex: 1;
  margin: 0 1px 3px 3px;
  padding: 30px 10px 0;
  border: 1px solid #686868;
  border-top: 0;
  background: repeating-linear-gradient(#f2f2f2 0 2px, #e4e4e4 2px 3px);
}
.thumb { width: 150px; text-align: center; font: 12px/15px "Liberation Serif", serif; }
.thumb-card { position: relative; height: 96px; padding: 3px 13px; border: 1px solid #dcdcdc; border-radius: 6px; background: #fff; }
.thumb-card svg { position: absolute; left: 2px; top: 1px; width: 18px; height: 18px; }
.thumb-view { height: 88px; background: #fcfcfc; }
.thumb figcaption { margin-top: 2px; }
.output { width: 404px; }
.output-body { margin: 0 2px 3px 2px; padding: 4px 6px 8px; background: #f0f0f0; }
.log { width: 100%; table-layout: fixed; border: 1px solid #84848c; border-bottom-width: 2px; font: 12px/16px "Noto Sans CJK SC", sans-serif; }
.c-step { width: 62px; }
.c-action { width: 165px; }
.log th { height: 25px; padding: 0 7px; text-align: left; font-weight: normal; border-right: 1px solid #e0e4e8; border-bottom: 1px solid #d0d4d8; background: linear-gradient(#fff 40%, #f3f5f7 42%); }
.log td { height: 17px; padding: 0; border-right: 1px solid #f4f2ec; border-bottom: 1px solid #f4f2ec; background: #e8e5dc; }
.log th:last-child, .log td:last-child { border-right: 1px solid #84848c; }
.log .part td { height: 11px; border-bottom: 2px solid #84848c; }
.tabs { display: flex; align-items: flex-start; font: 12px/16px "Noto Sans CJK SC", sans-serif; }
.tab { width: 40px; height: 21px; border: 1px solid #84848c; border-top: 0; border-left: 0; padding-right: 4px; background: linear-gradient(#d8d8de, #f4f4f4 70%); }
.tab.active { width: 46px; height: 23px; border-left: 1px solid #84848c; padding-right: 6px; background: #fff; }

.align-row { height: 24px; }
.align-row .tool-group { border-bottom: 0; }
.line svg { fill: none; }
.k { stroke: #000; }
.y { fill: #fff46a; stroke: #000; }
.b { stroke: #3a6ed8; }
.f { stroke: #4f6480; fill: #e4eefa; }

.status { display: flex; height: 21px; padding: 1px 0; border-top: 2px solid #989898; background: #f1edec; }
.cell { display: flex; align-items: center; padding-left: 4px; border-right: 1px solid #dcd8d6; white-space: nowrap; }
.s-main { width: 486px; }
.s-link { width: 108px; }
.s-pos { flex: 0 1 208px; padding-left: 12px; }
.s-model { flex: 1; }
.s-gap { width: 31px; }
.s-num { width: 40px; }
.s-scroll { width: 36px; }
.s-grip { width: 28px; justify-content: flex-end; align-items: flex-end; border: 0; }
.s-grip svg { width: 10px; height: 10px; }

.watermark { position: absolute; z-index: 6; left: 3px; top: 9px; display: flex; opacity: .75; pointer-events: none; }
.mark { width: 60px; height: 58px; }
.mark-text { display: flex; flex-direction: column; }
.mark-name { color: #2f8fe0; font: bold 27px/32px "Noto Sans CJK SC", sans-serif; }
.mark-url { margin-top: 4px; color: #3ca03c; font: bold 20px/20px "Liberation Serif", serif; }
```
